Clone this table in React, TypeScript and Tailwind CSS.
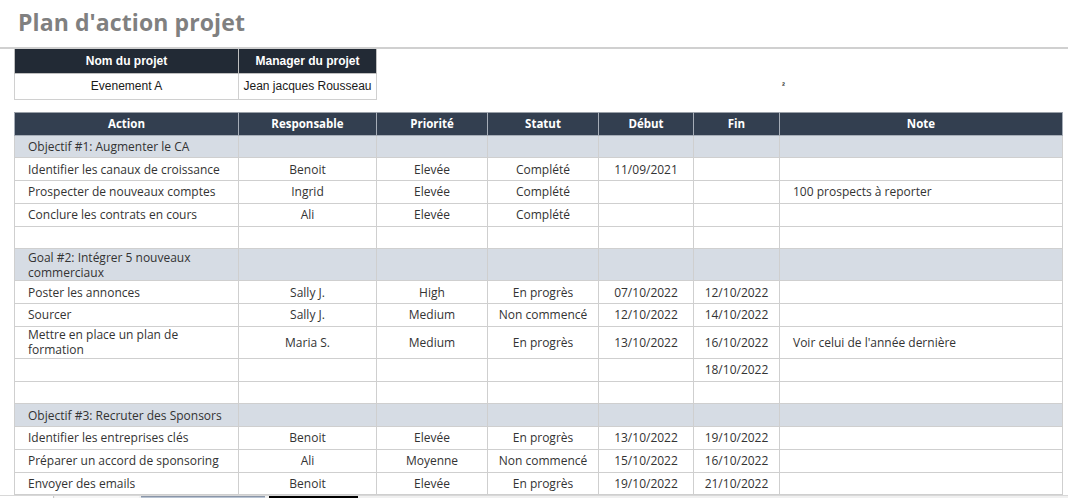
import React from "react";

type Row = {
  kind: "group" | "data";
  a?: React.ReactNode;
  r?: string;
  p?: string;
  s?: string;
  d?: string;
  f?: string;
  n?: string;
  tall?: boolean;
};

const rows: Row[] = [
  { kind: "group", a: "Objectif #1:  Augmenter le CA" },
  { kind: "data", a: "Identifier les canaux de croissance", r: "Benoit", p: "Elevée", s: "Complété", d: "11/09/2021" },
  { kind: "data", a: "Prospecter de nouveaux comptes", r: "Ingrid", p: "Elevée", s: "Complété", n: "100 prospects à reporter" },
  { kind: "data", a: "Conclure les contrats en cours", r: "Ali", p: "Elevée", s: "Complété" },
  { kind: "data" },
  {
    kind: "group",
    a: (
      <>
        Goal #2: Intégrer 5 nouveaux
        <br />
        commerciaux
      </>
    ),
    tall: true,
  },
  { kind: "data", a: "Poster les annonces", r: "Sally J.", p: "High", s: "En progrès", d: "07/10/2022", f: "12/10/2022" },
  { kind: "data", a: "Sourcer", r: "Sally J.", p: "Medium", s: "Non commencé", d: "12/10/2022", f: "14/10/2022" },
  {
    kind: "data",
    a: (
      <>
        Mettre en place un plan de
        <br />
        formation
      </>
    ),
    r: "Maria S.",
    p: "Medium",
    s: "En progrès",
    d: "13/10/2022",
    f: "16/10/2022",
    n: "Voir celui de l'année dernière",
    tall: true,
  },
  { kind: "data", f: "18/10/2022" },
  { kind: "data" },
  { kind: "group", a: "Objectif #3: Recruter des Sponsors" },
  { kind: "data", a: "Identifier les entreprises clés", r: "Benoit", p: "Elevée", s: "En progrès", d: "13/10/2022", f: "19/10/2022" },
  { kind: "data", a: "Préparer un accord de sponsoring", r: "Ali", p: "Moyenne", s: "Non commencé", d: "15/10/2022", f: "16/10/2022" },
  { kind: "data", a: "Envoyer des emails", r: "Benoit", p: "Elevée", s: "En progrès", d: "19/10/2022", f: "21/10/2022" },
];

const headers = ["Action", "Responsable", "Priorité", "Statut", "Début", "Fin", "Note"];
const widths = ["w-[224px]", "w-[138px]", "w-[111px]", "w-[111px]", "w-[95px]", "w-[86px]", "w-[283px]"];

export default function App() {
  return (
    <div className="w-[1068px] h-[498px] overflow-hidden bg-white flex flex-col" style={{ fontFamily: '"Open Sans", "DejaVu Sans", sans-serif' }}>
      <div className="h-[49px] shrink-0 border-b-2 border-[#d0d0d0] pl-[18px] pt-[7px]">
        <h1 className="text-[23px] font-bold text-[#808080] leading-[30px] tracking-[0.1px]">Plan d'action projet</h1>
      </div>

      <div className="flex items-center pl-[14px] shrink-0" style={{ fontFamily: '"Liberation Sans", Arial, sans-serif' }}>
        <table className="table-fixed border-collapse text-[12px]">
          <colgroup>
            <col className="w-[224px]" />
            <col className="w-[138px]" />
          </colgroup>
          <thead>
            <tr className="h-[24px] bg-[#222a35] text-white font-bold">
              <th className="border border-[#bfbfbf] border-t-0 font-bold">Nom du projet</th>
              <th className="border border-[#bfbfbf] border-t-0 font-bold">Manager du projet</th>
            </tr>
          </thead>
          <tbody>
            <tr className="h-[26px] text-[#1a1a1a]">
              <td className="border border-[#d0d0d0] text-center">Evenement A</td>
              <td className="border border-[#d0d0d0] text-center">Jean jacques Rousseau</td>
            </tr>
          </tbody>
        </table>
        <span className="ml-[405px] mt-[24px] text-[9px] leading-[9px] font-bold text-[#333]">²</span>
      </div>

      <div className="pl-[14px] mt-[12px] shrink-0">
        <table className="table-fixed border-collapse text-[12px] text-[#333]">
          <colgroup>
            {widths.map((w, i) => (
              <col key={i} className={w} />
            ))}
          </colgroup>
          <thead>
            <tr className="h-[23px] bg-[#333f50] text-white">
              {headers.map((h, i) => (
                <th key={i} className="border border-[#a6adb7] border-t-[#9aa0a8] font-bold text-[11.5px]">
                  {h}
                </th>
              ))}
            </tr>
          </thead>
          <tbody>
            {rows.map((row, i) => {
              const bg = row.kind === "group" ? "bg-[#d6dce4]" : "bg-white";
              const h = row.tall ? "h-[32px]" : "h-[22.75px]";
              const cell = "border border-[#cfcfcf] leading-[15px]";
              return (
                <tr key={i} className={`${bg} ${h}`}>
                  <td className={`${cell} text-left pl-[13px] pr-1`}>{row.a ?? ""}</td>
                  <td className={`${cell} text-center`}>{row.r ?? ""}</td>
                  <td className={`${cell} text-center`}>{row.p ?? ""}</td>
                  <td className={`${cell} text-center`}>{row.s ?? ""}</td>
                  <td className={`${cell} text-center`}>{row.d ?? ""}</td>
                  <td className={`${cell} text-center`}>{row.f ?? ""}</td>
                  <td className={`${cell} text-left pl-[13px]`}>{row.n ?? ""}</td>
                </tr>
              );
            })}
          </tbody>
        </table>
      </div>

      <div className="flex-1 bg-[#f0f0f0] border-t border-[#d8d8d8] flex items-stretch">
        <div className="w-[54px] bg-white border-r border-[#c8c8c8]" />
        <div className="w-[84px] bg-[#f7f7f7] ml-[1px]" />
        <div className="w-[124px] ml-[2px] bg-[#b8c3d2] border-t border-[#8a96a8]" />
        <div className="w-[89px] ml-[4px] bg-black" />
      </div>
    </div>
  );
}
